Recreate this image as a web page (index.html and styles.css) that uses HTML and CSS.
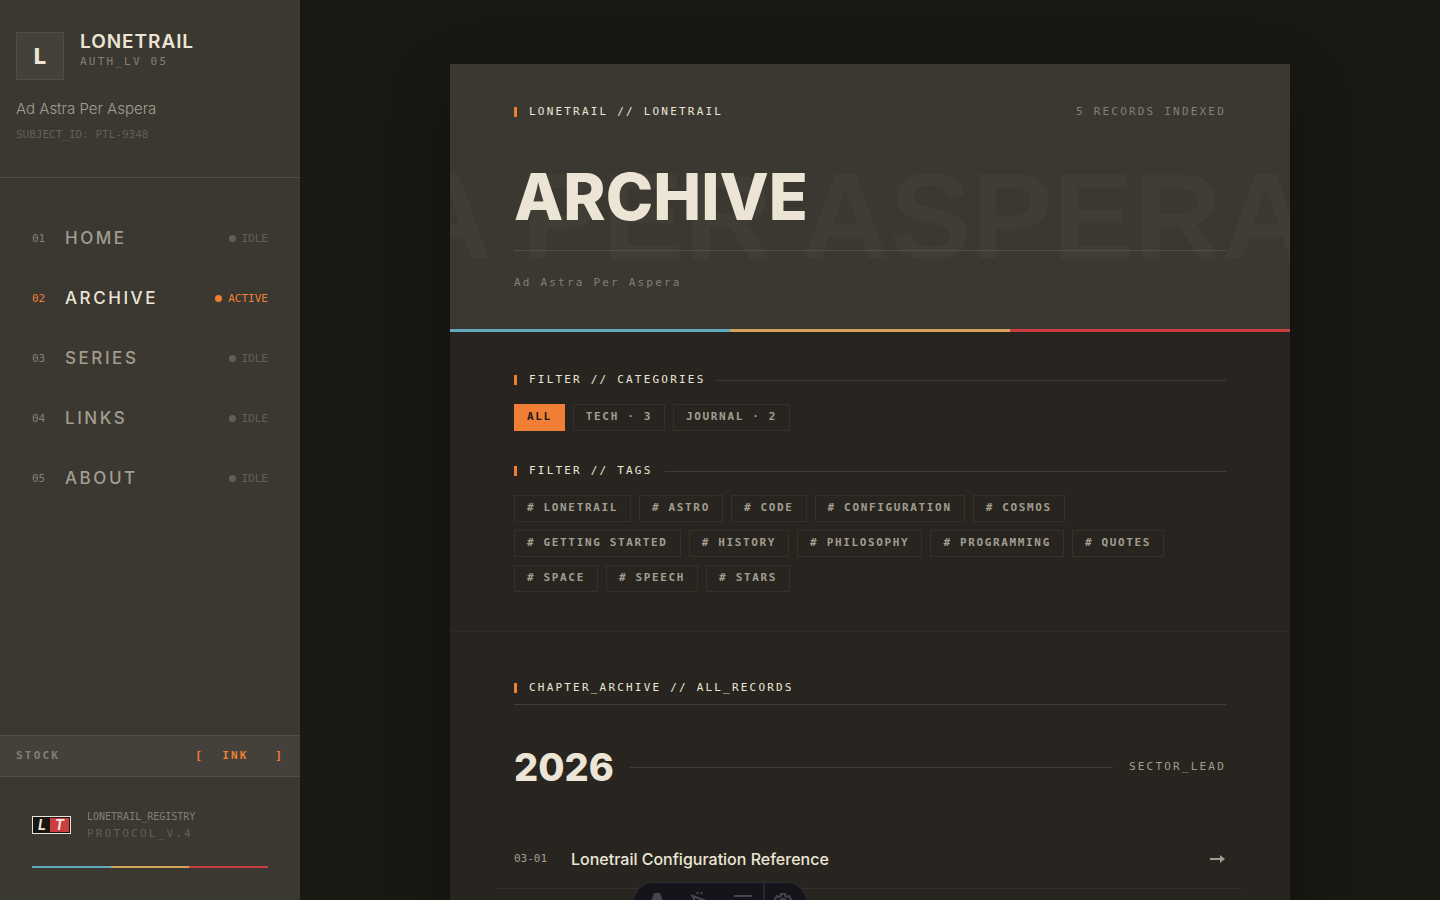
FILE: index.html
```html
<!DOCTYPE html>
<html lang="en">
<head>
    <meta charset="UTF-8">
    <meta name="viewport" content="width=device-width, initial-scale=1">
    <title>Archive - Lonetrail</title>
    <link rel="stylesheet" href="styles.css">
</head>
<body>

    <!-- Sidebar -->
    <aside class="sidebar">
        <header class="profile">
            <div class="brand">
                <span class="brand-mark">L</span>
                <div>
                    <a class="brand-name" href="#">LONETRAIL</a>
                    <p class="mono brand-level">AUTH_LV 05</p>
                </div>
            </div>
            <p class="motto">Ad Astra Per Aspera</p>
            <p class="subject">SUBJECT_ID: PTL-9348</p>
        </header>

        <nav class="nav">
            <a class="nav-item" href="#"><span class="num">01</span><span class="name">HOME</span><span class="state">IDLE</span></a>
            <a class="nav-item active" href="#"><span class="num">02</span><span class="name">ARCHIVE</span><span class="state">ACTIVE</span></a>
            <a class="nav-item" href="#"><span class="num">03</span><span class="name">SERIES</span><span class="state">IDLE</span></a>
            <a class="nav-item" href="#"><span class="num">04</span><span class="name">LINKS</span><span class="state">IDLE</span></a>
            <a class="nav-item" href="#"><span class="num">05</span><span class="name">ABOUT</span><span class="state">IDLE</span></a>
        </nav>

        <button class="mono stock" type="button">
            <span>STOCK</span>
            <span class="stock-value"><span>[</span><span class="stock-name">INK</span><span>]</span></span>
        </button>

        <footer class="registry">
            <div class="registry-row">
                <span class="plate"><span>L</span><span class="plate-red">T</span></span>
                <div>
                    <p class="registry-name">LONETRAIL_REGISTRY</p>
                    <p class="mono registry-version">PROTOCOL_V.4</p>
                </div>
            </div>
            <div class="tricolor thin"><i></i><i></i><i></i></div>
        </footer>
    </aside>

    <!-- Page -->
    <main class="main">
        <article class="sheet">
            <header class="hero">
                <div class="watermark" aria-hidden="true">A PER ASPERA</div>
                <div class="hero-top">
                    <p class="mono label">LONETRAIL // LONETRAIL</p>
                    <p class="mono records">5 RECORDS INDEXED</p>
                </div>
                <h1>ARCHIVE</h1>
                <p class="mono tagline">Ad Astra Per Aspera</p>
            </header>
            <div class="tricolor"><i></i><i></i><i></i></div>

            <section class="filters">
                <h2 class="mono label ruled">FILTER // CATEGORIES</h2>
                <div class="chips">
                    <button class="chip selected" type="button">ALL</button>
                    <button class="chip" type="button">TECH · 3</button>
                    <button class="chip" type="button">JOURNAL · 2</button>
                </div>

                <h2 class="mono label ruled">FILTER // TAGS</h2>
                <div class="chips">
                    <button class="chip" type="button"># LONETRAIL</button>
                    <button class="chip" type="button"># ASTRO</button>
                    <button class="chip" type="button"># CODE</button>
                    <button class="chip" type="button"># CONFIGURATION</button>
                    <button class="chip" type="button"># COSMOS</button>
                    <button class="chip" type="button"># GETTING STARTED</button>
                    <button class="chip" type="button"># HISTORY</button>
                    <button class="chip" type="button"># PHILOSOPHY</button>
                    <button class="chip" type="button"># PROGRAMMING</button>
                    <button class="chip" type="button"># QUOTES</button>
                    <button class="chip" type="button"># SPACE</button>
                    <button class="chip" type="button"># SPEECH</button>
                    <button class="chip" type="button"># STARS</button>
                </div>
            </section>

            <section class="records-list">
                <div class="list-head">
                    <h2 class="mono label">CHAPTER_ARCHIVE // ALL_RECORDS</h2>
                </div>
                <div class="year">
                    <h3>2026</h3>
                    <span class="mono sector">SECTOR_LEAD</span>
                </div>
                <a class="record" href="#">
                    <time class="date">03-01</time>
                    <span class="title">Lonetrail Configuration Reference</span>
                    <svg class="arrow" viewBox="0 0 16 10" width="16" height="10"><path d="M0 4h11v2H0z"/><path d="M10 1l5 4-5 4z"/></svg>
                </a>
            </section>
        </article>
    </main>

    <!-- Dev toolbar -->
    <div class="toolbar">
        <button type="button" aria-label="Menu"><svg viewBox="0 0 20 20" width="20" height="20"><path d="M7 2h6l6 17h-5l-4-7-4 7H1z" fill="currentColor"/></svg></button>
        <button type="button" aria-label="Inspect"><svg viewBox="0 0 20 20" width="20" height="20"><path d="M3 5l13 5-6 2-3 6zM7 1l1 2M12 1l-1 2M1 4l3 2" fill="none" stroke="currentColor" stroke-width="2"/></svg></button>
        <button type="button" aria-label="Audit"><svg viewBox="0 0 20 20" width="20" height="20"><path d="M1 5h18M1 11h10M12 12l2 2 5-5" fill="none" stroke="currentColor" stroke-width="2"/></svg></button>
        <button class="settings" type="button" aria-label="Settings"><svg viewBox="0 0 20 20" width="20" height="20"><path d="M8 3h4v2l2 1 2-1 2 3-1 2v2l1 2-2 3-2-1-2 1v2H8v-2l-2-1-2 1-2-3 1-2v-2L2 8l2-3 2 1 2-1z" fill="none" stroke="currentColor" stroke-width="2"/><circle cx="10" cy="11" r="3" fill="none" stroke="currentColor" stroke-width="2"/></svg></button>
    </div>

</body>
</html>
```
FILE: styles.css
```css
:root {
    --ground: #191813;
    --paper: #282520;
    --panel: #3b3831;
    --raised: #44413a;
    --line: #514e46;
    --rule: #403d36;
    --cream: #ece5d5;
    --soft: #a39d8f;
    --muted: #857f73;
    --faint: #625f56;
    --orange: #f07f35;
    --blue: #5fa9bf;
    --gold: #d4a25a;
    --red: #cb3d40;
    --sans: Inter, "Liberation Sans", sans-serif;
    --display: "Liberation Sans", Arial, sans-serif;
    --mono: "DejaVu Sans Mono", monospace;
}

* {
    box-sizing: border-box;
}

body {
    display: flex;
    height: 100vh;
    margin: 0;
    overflow: hidden;
    background: var(--ground);
    color: var(--cream);
    font-family: var(--sans);
}

h1, h2, h3, p {
    margin: 0;
}

a {
    color: inherit;
    text-decoration: none;
}

button {
    border: none;
    background: none;
    cursor: pointer;
}

.mono {
    font-family: var(--mono);
    font-size: 11px;
    line-height: 16px;
    letter-spacing: 0.2em;
}

/* Sidebar */
.sidebar {
    display: flex;
    flex: 0 0 300px;
    flex-direction: column;
    background: var(--panel);
}

.profile {
    padding: 32px 16px 34px;
    border-bottom: 1px solid var(--line);
}

.brand {
    display: flex;
    gap: 16px;
}

.brand-mark {
    display: grid;
    place-items: center;
    width: 48px;
    height: 48px;
    background: var(--raised);
    border: 1px solid var(--line);
    font-size: 22px;
    font-weight: 800;
}

.brand-name {
    display: block;
    font-size: 19px;
    font-weight: 600;
    line-height: 20px;
    letter-spacing: 0.05em;
}

.brand-level {
    margin-top: 2px;
    color: var(--muted);
}

.motto {
    margin-top: 17px;
    color: var(--soft);
    font-size: 15px;
    font-weight: 300;
    line-height: 24px;
}

.subject {
    margin-top: 6px;
    color: var(--faint);
    font-family: var(--mono);
    font-size: 11px;
    line-height: 16px;
}

.nav {
    flex: 1;
    padding: 30px 32px;
}

.nav-item {
    display: flex;
    align-items: center;
    height: 60px;
    color: var(--soft);
}

.num, .state {
    font-family: var(--mono);
    font-size: 11px;
}

.num {
    width: 33px;
    color: var(--muted);
}

.name {
    flex: 1;
    font-size: 17px;
    font-weight: 500;
    letter-spacing: 0.15em;
}

.state {
    display: flex;
    align-items: center;
    gap: 6px;
    color: var(--faint);
}

.state::before {
    content: "";
    width: 7px;
    height: 7px;
    border-radius: 50%;
    background: currentColor;
}

.active .name {
    color: var(--cream);
}

.active .num, .active .state {
    color: var(--orange);
}

.stock {
    display: flex;
    justify-content: space-between;
    align-items: center;
    height: 42px;
    padding: 0 16px;
    background: var(--raised);
    border-top: 1px solid var(--line);
    border-bottom: 1px solid var(--line);
    color: var(--muted);
    font-weight: 700;
}

.stock-value {
    display: flex;
    color: var(--orange);
}

.stock-name {
    width: 71px;
    padding-left: 18px;
    text-align: left;
}

.registry {
    padding: 31px 32px 32px;
}

.registry-row {
    display: flex;
    align-items: center;
    gap: 16px;
    margin-bottom: 24px;
}

.plate {
    display: grid;
    grid-template-columns: 1fr 19px;
    width: 39px;
    height: 18px;
    padding: 1px;
    background: #171612;
    border: 1px solid var(--cream);
    font-size: 14px;
    font-style: italic;
    font-weight: 700;
    line-height: 14px;
    text-align: center;
}

.plate-red {
    background: var(--red);
}

.registry-name {
    color: var(--muted);
    font-family: var(--mono);
    font-size: 10px;
    line-height: 18px;
}

.registry-version {
    color: var(--faint);
}

.tricolor {
    display: flex;
    height: 3px;
}

.tricolor.thin {
    height: 2px;
}

.tricolor i {
    flex: 1;
    background: var(--blue);
}

.tricolor i:nth-child(2) {
    background: var(--gold);
}

.tricolor i:nth-child(3) {
    background: var(--red);
}

/* Page */
.main {
    flex: 1;
    padding: 64px 32px 0;
}

.sheet {
    max-width: 840px;
    min-height: 100%;
    margin: 0 auto;
    background: var(--paper);
    box-shadow: 0 20px 60px rgba(0, 0, 0, 0.3);
}

.hero {
    position: relative;
    padding: 40px 64px 38px;
    overflow: hidden;
    background: var(--panel);
}

.watermark {
    position: absolute;
    top: 83px;
    right: -20px;
    color: var(--rule);
    font-family: var(--display);
    font-size: 122px;
    font-weight: 700;
    line-height: 140px;
    white-space: nowrap;
}

.hero-top, .hero h1, .tagline {
    position: relative;
}

.hero-top {
    display: flex;
    justify-content: space-between;
}

.label {
    display: flex;
    align-items: center;
    gap: 12px;
    font-weight: 400;
}

.label::before {
    content: "";
    width: 3px;
    height: 10px;
    background: var(--orange);
}

.records {
    color: var(--muted);
}

.hero h1 {
    margin-top: 37px;
    padding-bottom: 13px;
    border-bottom: 1px solid var(--line);
    font-size: 64px;
    font-weight: 800;
    line-height: 80px;
}

.tagline {
    margin-top: 24px;
    color: var(--muted);
}

/* Filters */
.filters {
    padding: 40px 64px 39px;
    border-bottom: 1px solid #2e2b26;
}

.ruled::after {
    content: "";
    flex: 1;
    height: 1px;
    background: var(--rule);
}

.chips {
    display: flex;
    flex-wrap: wrap;
    gap: 8px;
    margin-top: 16px;
}

.chips + .label {
    margin-top: 32px;
}

.chip {
    height: 27px;
    padding: 0 12px 2px;
    border: 1px solid #34312b;
    color: var(--soft);
    font-family: var(--mono);
    font-size: 11px;
    font-weight: 700;
    letter-spacing: 0.15em;
}

.chip.selected {
    background: var(--orange);
    border-color: var(--orange);
    color: #1f1b15;
}

/* Records */
.records-list {
    padding: 48px 64px;
}

.list-head {
    padding-bottom: 8px;
    border-bottom: 1px solid var(--rule);
}

.year {
    display: flex;
    align-items: center;
    gap: 16px;
    margin-top: 38px;
}

.year h3 {
    font-size: 38px;
    font-weight: 800;
    line-height: 48px;
}

.year::after {
    content: "";
    flex: 1;
    height: 1px;
    background: var(--rule);
}

.sector {
    order: 1;
    color: var(--soft);
}

.record {
    display: flex;
    align-items: center;
    height: 60px;
    margin: 38px -16px 0;
    padding: 0 16px;
    border-bottom: 1px solid #34312b;
}

.date {
    width: 57px;
    color: var(--soft);
    font-family: var(--mono);
    font-size: 11px;
}

.title {
    flex: 1;
    font-size: 16px;
    font-weight: 500;
}

.arrow {
    fill: var(--soft);
}

/* Dev toolbar */
.toolbar {
    position: fixed;
    bottom: -22px;
    left: 50%;
    display: flex;
    align-items: flex-start;
    height: 40px;
    overflow: hidden;
    transform: translateX(-50%);
    background: #14151a;
    border: 1px solid #2b2f3a;
    border-radius: 20px;
}

.toolbar button {
    width: 43px;
    height: 40px;
    padding: 0 0 2px 3px;
    color: #46464a;
}

.toolbar .settings {
    padding: 0 5px 2px 0;
    border-left: 2px solid #26272d;
}
```
